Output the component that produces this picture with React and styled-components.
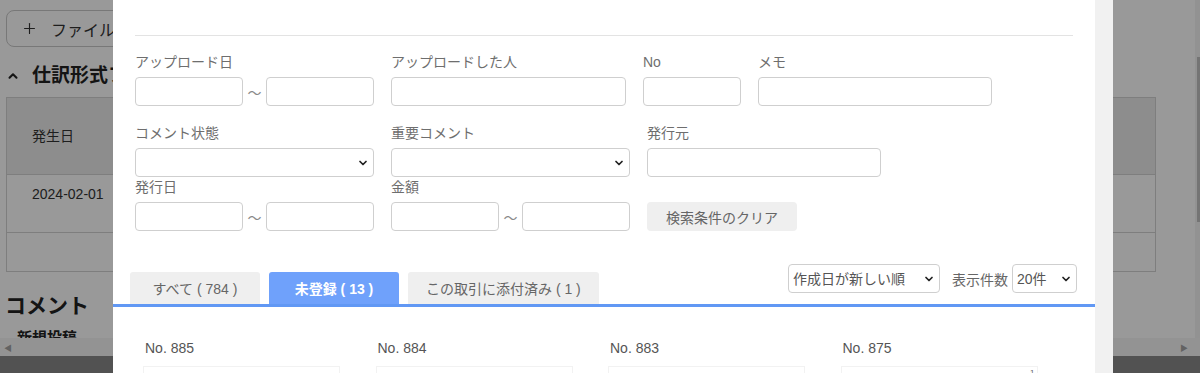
import React from 'react';
import styled, { createGlobalStyle } from 'styled-components';
import { Plus, ChevronUp, ChevronDown } from 'lucide-react';

const GlobalStyle = createGlobalStyle`
  html, body {
    margin: 0;
    padding: 0;
    background: #fff;
  }
  body {
    font-family: "Liberation Sans", "Noto Sans CJK JP", sans-serif;
    color: #333;
  }
  * {
    box-sizing: border-box;
  }
`;

const Viewport = styled.div`
  position: relative;
  width: 1200px;
  height: 373px;
  overflow: hidden;
`;

/* background page, dimmed by the overlay */

const Page = styled.div`
  display: flex;
  flex-direction: column;
  height: 373px;
  background: #fff;
`;

const PageContent = styled.div`
  display: flex;
  height: 338px;
  flex-shrink: 0;
  overflow: hidden;
`;

const PageMain = styled.div`
  flex: 1;
  display: flex;
  flex-direction: column;
  align-items: flex-start;
  padding: 10px 0 0 6px;
  overflow: hidden;

  & > * {
    flex-shrink: 0;
  }
`;

const AddButton = styled.button`
  display: flex;
  align-items: center;
  gap: 13px;
  width: 240px;
  height: 37px;
  padding: 0 12px 0 14px;
  border: 1px solid #c8c8c8;
  border-radius: 8px;
  background: #fff;
  color: #333;
  font-family: inherit;
  font-size: 16px;
`;

const SectionTitle = styled.h2`
  display: flex;
  align-items: center;
  gap: 12px;
  margin: 16px 0 0 0;
  font-size: 19px;
  line-height: 26px;
  font-weight: bold;
  color: #222;
`;

const BgTable = styled.div`
  margin-top: 8px;
  width: 1150px;
  border: 1px solid #d2d2d2;
`;

const BgRow = styled.div`
  display: flex;
  align-items: ${p => (p.$head ? 'center' : 'flex-start')};
  height: ${p => p.$h}px;
  padding: ${p => (p.$head ? '0' : '9px')} 0 0 25px;
  background: ${p => (p.$head ? '#ececec' : '#fff')};
  border-top: ${p => (p.$first ? 'none' : '1px solid #d2d2d2')};
  font-size: 14px;
  line-height: 20px;
  color: #333;
`;

const CommentTitle = styled.h2`
  margin: 19px 0 0 -1px;
  font-size: 21px;
  line-height: 30px;
  font-weight: bold;
  color: #222;
`;

const SubTitle = styled.h3`
  margin: 6px 0 0 11px;
  font-size: 15px;
  line-height: 22px;
  font-weight: bold;
  color: #222;
`;

const VScroll = styled.div`
  width: 5px;
  padding-top: 57px;
  background: #f4f4f4;
  display: flex;
  justify-content: flex-end;
`;

const VThumb = styled.div`
  width: 3px;
  height: 165px;
  background: #c1c1c1;
`;

const HScroll = styled.div`
  display: flex;
  align-items: center;
  justify-content: space-between;
  height: 18px;
  flex-shrink: 0;
  padding: 0 12px 0 4px;
  background: #f6f6f6;
  color: #a3a3a3;
  font-size: 8px;
`;

const Footer = styled.div`
  height: 17px;
  flex-shrink: 0;
  background: #898989;
`;

const Overlay = styled.div`
  position: absolute;
  inset: 0;
  background: rgba(0, 0, 0, 0.4);
`;

/* modal */

const Modal = styled.div`
  position: absolute;
  top: 0;
  left: 113px;
  width: 1000px;
  height: 373px;
  display: flex;
  background: #fff;
`;

const ModalBody = styled.div`
  flex: 1;
  padding: 35px 22px 0;
  overflow: hidden;
`;

const ModalScroll = styled.div`
  width: 18px;
  background: #f1f1f1;
`;

const Rule = styled.hr`
  margin: 0;
  border: none;
  border-top: 1px solid #e3e3e3;
`;

const Form = styled.div`
  display: flex;
  flex-direction: column;
  margin-top: 16px;
`;

const FormRow = styled.div`
  display: flex;
  align-items: flex-end;
  gap: 17px;
  margin-top: ${p => p.$top || 0}px;
`;

const Field = styled.div`
  display: flex;
  flex-direction: column;
  width: ${p => p.$w}px;
`;

const Label = styled.label`
  font-size: 14px;
  line-height: 20px;
  color: #6e6e6e;
  margin-bottom: 5px;
`;

const Input = styled.input`
  width: ${p => (p.$w ? `${p.$w}px` : '100%')};
  height: 29px;
  border: 1px solid #cfcfcf;
  border-radius: 4px;
  padding: 0 8px;
  font-family: inherit;
  font-size: 14px;
  background: #fff;
`;

const Range = styled.div`
  display: flex;
  align-items: center;
`;

const Tilde = styled.span`
  width: 23px;
  text-align: center;
  font-size: 14px;
  color: #8a8a8a;
`;

const SelectWrap = styled.div`
  position: relative;
  width: ${p => (p.$w ? `${p.$w}px` : '100%')};
  height: 29px;
`;

const SelectBox = styled.select`
  appearance: none;
  width: 100%;
  height: 100%;
  border: 1px solid #cfcfcf;
  border-radius: 4px;
  padding: 0 22px 0 4px;
  background: #fff;
  font-family: inherit;
  font-size: 14px;
  color: #555;
`;

const SelectArrow = styled.span`
  position: absolute;
  top: 9px;
  right: 5px;
  display: flex;
  color: #222;
  pointer-events: none;
`;

const ClearButton = styled.button`
  width: 150px;
  height: 29px;
  border: none;
  border-radius: 4px;
  background: #efefef;
  color: #666;
  font-family: inherit;
  font-size: 14px;
`;

const TabBar = styled.div`
  display: flex;
  justify-content: space-between;
  height: 43px;
  margin: 33px -22px 0;
  padding: 0 18px 0 17px;
  border-bottom: 3px solid #6198f4;
`;

const Tabs = styled.div`
  display: flex;
  align-items: flex-end;
  gap: 9px;
`;

const Tab = styled.div`
  display: flex;
  align-items: center;
  justify-content: center;
  min-width: 130px;
  height: 32px;
  padding: 0 18px;
  border-radius: 3px 3px 0 0;
  background: ${p => (p.$active ? '#6fa1fb' : '#efefef')};
  color: ${p => (p.$active ? '#fff' : '#666')};
  font-size: 14px;
  font-weight: ${p => (p.$active ? 'bold' : 'normal')};
  white-space: pre;
`;

const ListControls = styled.div`
  display: flex;
  align-items: center;
  align-self: flex-start;
  gap: 4px;
`;

const ControlLabel = styled.span`
  margin-left: 8px;
  font-size: 14px;
  color: #666;
`;

const Cards = styled.div`
  display: grid;
  grid-template-columns: repeat(4, 1fr);
  padding: 31px 0 0 8px;
`;

const Card = styled.div`
  display: flex;
  flex-direction: column;
`;

const CardNo = styled.div`
  padding-left: 2px;
  font-size: 14px;
  line-height: 20px;
  color: #555;
`;

const Thumb = styled.div`
  width: 197px;
  height: 160px;
  margin-top: 8px;
  padding: 1px 2px 0;
  border: 1px solid #f2f2f2;
  text-align: right;
  font-size: 8px;
  line-height: 9px;
  color: #666;
`;

const Select = ({ w, value }) => (
  <SelectWrap $w={w}>
    <SelectBox defaultValue={value}>
      <option value={value}>{value}</option>
    </SelectBox>
    <SelectArrow>
      <ChevronDown size={12} strokeWidth={3.5} />
    </SelectArrow>
  </SelectWrap>
);

const DateRange = () => (
  <Range>
    <Input $w={108} />
    <Tilde>～</Tilde>
    <Input $w={108} />
  </Range>
);

const cards = [
  { no: 885 },
  { no: 884 },
  { no: 883 },
  { no: 875, page: '1' }
];

export default function App() {
  return (
    <Viewport>
      <GlobalStyle />
      <Page>
        <PageContent>
          <PageMain>
            <AddButton>
              <Plus size={17} strokeWidth={1.6} />
              ファイルを追加
            </AddButton>
            <SectionTitle>
              <ChevronUp size={14} strokeWidth={3.5} />
              仕訳形式ファイル
            </SectionTitle>
            <BgTable>
              <BgRow $head $first $h={76}>発生日</BgRow>
              <BgRow $h={58}>2024-02-01</BgRow>
              <BgRow $h={39} />
            </BgTable>
            <CommentTitle>コメント</CommentTitle>
            <SubTitle>新規投稿</SubTitle>
          </PageMain>
          <VScroll>
            <VThumb />
          </VScroll>
        </PageContent>
        <HScroll>
          <span>◀</span>
          <span>▶</span>
        </HScroll>
        <Footer />
      </Page>

      <Overlay />

      <Modal>
        <ModalBody>
          <Rule />
          <Form>
            <FormRow>
              <Field $w={239}>
                <Label>アップロード日</Label>
                <DateRange />
              </Field>
              <Field $w={235}>
                <Label>アップロードした人</Label>
                <Input />
              </Field>
              <Field $w={98}>
                <Label>No</Label>
                <Input />
              </Field>
              <Field $w={234}>
                <Label>メモ</Label>
                <Input />
              </Field>
            </FormRow>
            <FormRow $top={17}>
              <Field $w={239}>
                <Label>コメント状態</Label>
                <Select value="" />
              </Field>
              <Field $w={239}>
                <Label>重要コメント</Label>
                <Select value="" />
              </Field>
              <Field $w={234}>
                <Label>発行元</Label>
                <Input />
              </Field>
            </FormRow>
            <FormRow>
              <Field $w={239}>
                <Label>発行日</Label>
                <DateRange />
              </Field>
              <Field $w={239}>
                <Label>金額</Label>
                <DateRange />
              </Field>
              <ClearButton>検索条件のクリア</ClearButton>
            </FormRow>
          </Form>

          <TabBar>
            <Tabs>
              <Tab>すべて ( 784 )</Tab>
              <Tab $active>未登録 ( 13 )</Tab>
              <Tab>この取引に添付済み ( 1 )</Tab>
            </Tabs>
            <ListControls>
              <Select w={152} value="作成日が新しい順" />
              <ControlLabel>表示件数</ControlLabel>
              <Select w={65} value="20件" />
            </ListControls>
          </TabBar>

          <Cards>
            {cards.map(card => (
              <Card key={card.no}>
                <CardNo>No. {card.no}</CardNo>
                <Thumb>{card.page}</Thumb>
              </Card>
            ))}
          </Cards>
        </ModalBody>
        <ModalScroll />
      </Modal>
    </Viewport>
  );
}
